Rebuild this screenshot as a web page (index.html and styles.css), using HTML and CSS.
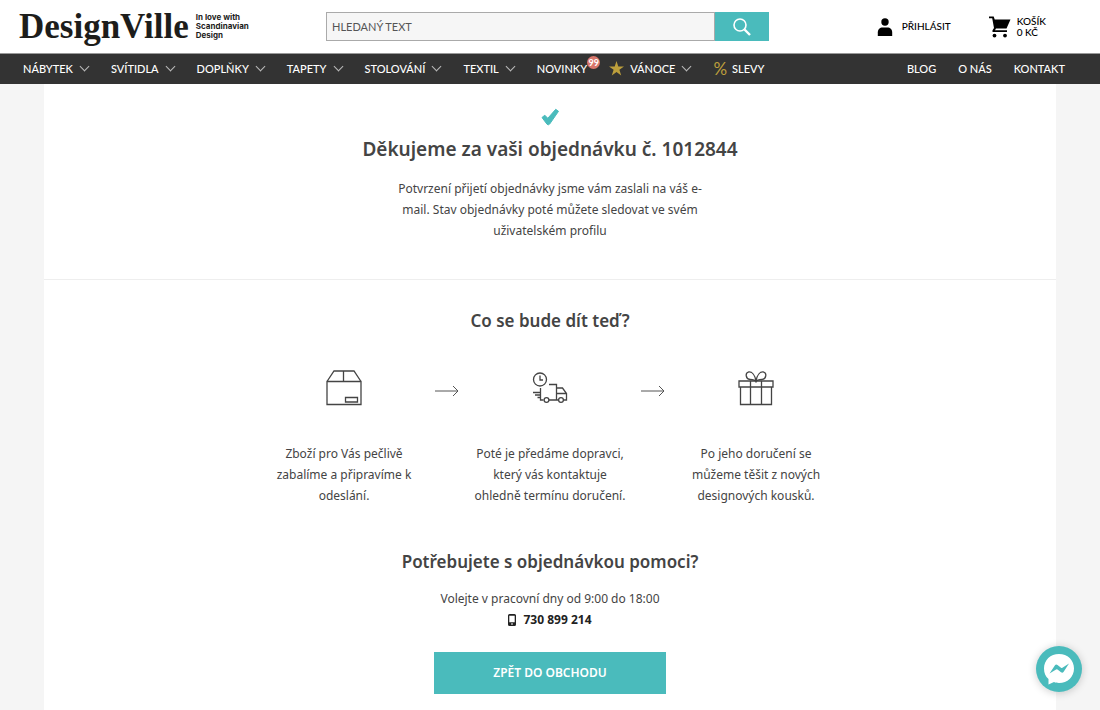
FILE: index.html
```html
<!DOCTYPE html>
<html lang="cs">
<head>
    <meta charset="UTF-8">
    <meta name="viewport" content="width=device-width, initial-scale=1.0">
    <title>DesignVille</title>
    <link rel="stylesheet" href="styles.css">
</head>
<body>

    <header class="header">
        <a class="logo" href="#">
            <span class="logo-name">DesignVille</span>
            <span class="logo-claim">In love with<br>Scandinavian<br>Design</span>
        </a>

        <form class="search">
            <input class="search-input" type="text" placeholder="HLEDANÝ TEXT" aria-label="Hledaný text">
            <button class="search-button" type="submit" aria-label="Hledat">
                <svg width="20" height="20" viewBox="0 0 20 20" fill="none" stroke="#fff">
                    <circle cx="8" cy="8" r="6" stroke-width="1.600"/>
                    <path d="M12.500 12.500l5.500 5.500" stroke-width="2.400"/>
                </svg>
            </button>
        </form>

        <div class="user-links">
            <a class="user-link login" href="#">
                <svg width="16" height="18" viewBox="0 0 16 18">
                    <circle cx="8" cy="4" r="3.700"/>
                    <path d="M.8 18v-3.500C.8 11 3 9.400 5.500 9.400h5c2.500 0 4.700 1.600 4.700 5.100V18z"/>
                </svg>
                <span>PŘIHLÁSIT</span>
            </a>
            <a class="user-link" href="#">
                <svg width="22" height="22" viewBox="0 0 22 22">
                    <path d="M0 .5h4.700l1 3H21.500L17.500 12.500H7L6 14.300H18V16H3.500V14.300L5 12 3.200 2.200H0z"/>
                    <circle cx="5.500" cy="19.600" r="1.900"/>
                    <circle cx="16" cy="19.600" r="1.900"/>
                </svg>
                <span>KOŠÍK<br>0 KČ</span>
            </a>
        </div>
    </header>

    <nav class="nav">
        <a class="nav-link dropdown" href="#">NÁBYTEK</a>
        <a class="nav-link dropdown" href="#">SVÍTIDLA</a>
        <a class="nav-link dropdown" href="#">DOPLŇKY</a>
        <a class="nav-link dropdown" href="#">TAPETY</a>
        <a class="nav-link dropdown" href="#">STOLOVÁNÍ</a>
        <a class="nav-link dropdown" href="#">TEXTIL</a>
        <a class="nav-link" href="#">NOVINKY<span class="badge">99</span></a>
        <a class="nav-link dropdown" href="#">
            <svg class="star" width="15" height="15" viewBox="0 0 15 15">
                <path fill="#bd9f3c" d="M7.500 0l1.800 5.400H15l-4.600 3.400 1.800 5.700-4.700-3.500-4.700 3.500 1.800-5.700L0 5.400h5.700z"/>
            </svg>
            VÁNOCE
        </a>
        <a class="nav-link" href="#"><span class="percent">%</span>SLEVY</a>
        <div class="nav-right">
            <a class="nav-link" href="#">BLOG</a>
            <a class="nav-link" href="#">O NÁS</a>
            <a class="nav-link" href="#">KONTAKT</a>
        </div>
    </nav>

    <main class="content">
        <section class="thanks">
            <svg class="check" width="18" height="18" viewBox="0 0 18 18">
                <path fill="#4abbbc" stroke="#4abbbc" stroke-linejoin="round" d="M1 9.500L3.800 7.200 6.800 10.300 14.700 1.300 17.500 3.300 8.700 16Q7.400 17.500 6 16.200z"/>
            </svg>
            <h1>Děkujeme za vaši objednávku č. 1012844</h1>
            <p>Potvrzení přijetí objednávky jsme vám zaslali na váš e-mail. Stav objednávky poté můžete sledovat ve svém uživatelském profilu</p>
        </section>

        <section class="next">
            <h2>Co se bude dít teď?</h2>
            <div class="steps">
                <div class="step">
                    <svg width="36" height="36" viewBox="0 0 36 36" fill="none" stroke="#444" stroke-width="1.300">
                        <path d="M1 11.500h34V34.500H1zM1 11.500L8 1h20l7 10.500M17.500 1v10.500M19.500 27.500h12v4.500h-12z"/>
                    </svg>
                    <p>Zboží pro Vás pečlivě zabalíme a připravíme k odeslání.</p>
                </div>
                <svg class="arrow" width="24" height="12" viewBox="0 0 24 12" fill="none" stroke="#555">
                    <path d="M0 6h23M18 1l5 5-5 5"/>
                </svg>
                <div class="step">
                    <svg width="36" height="36" viewBox="0 0 36 36" fill="none" stroke="#444" stroke-width="1.300">
                        <circle cx="8" cy="9.500" r="6.500"/>
                        <path d="M8 5.500v4.500h3M17 14.500h7.500V30M8.500 18v12h3M17 30h9.500M31.500 30H34.500V23.500L30.500 18H24.500M24.500 23.500h10M1 22.500h7M3 25h5M5.500 27.500h3"/>
                        <circle cx="14.500" cy="30" r="2.400"/>
                        <circle cx="29" cy="30" r="2.400"/>
                    </svg>
                    <p>Poté je předáme dopravci, který vás kontaktuje ohledně termínu doručení.</p>
                </div>
                <svg class="arrow" width="24" height="12" viewBox="0 0 24 12" fill="none" stroke="#555">
                    <path d="M0 6h23M18 1l5 5-5 5"/>
                </svg>
                <div class="step">
                    <svg width="36" height="36" viewBox="0 0 36 36" fill="none" stroke="#444" stroke-width="1.300">
                        <path d="M1 11h34v6H1zM2.500 17v17.500h31V17M12.500 11v23.500M23.500 11v23.500"/>
                        <path d="M18 11C17 5 14 1.500 10.500 2 7 3 7.500 9 12 9.500c3 .3 5 .5 6 1.500zM18 11c1-6 4-9.500 7.500-9C29 3 28.500 9 24 9.500c-3 .3-5 .5-6 1.500z"/>
                    </svg>
                    <p>Po jeho doručení se můžeme těšit z nových designových kousků.</p>
                </div>
            </div>
        </section>

        <section class="help">
            <h2>Potřebujete s objednávkou pomoci?</h2>
            <p>Volejte v pracovní dny od 9:00 do 18:00</p>
            <a class="phone" href="tel:730899214">
                <svg width="8" height="12" viewBox="0 0 8 12">
                    <path fill="#222" fill-rule="evenodd" d="M1.500 0h5Q8 0 8 1.500v9Q8 12 6.500 12h-5Q0 12 0 10.500v-9Q0 0 1.500 0zM1.300 1.800v6.400h5.400V1.800zM3 9.600v1h2v-1z"/>
                </svg>
                730 899 214
            </a>
            <a class="back-button" href="#">ZPĚT DO OBCHODU</a>
        </section>
    </main>

    <button class="chat" type="button" aria-label="Chat">
        <svg width="32" height="32" viewBox="0 0 32 32">
            <path fill="#fff" d="M16 1C24.500 1 31 7 31 15.500S24.500 30 16 30c-2 0-3.500-.3-5-.9L5.500 31.500V26C2.500 23.500 1 20 1 15.500 1 7 7.500 1 16 1z"/>
            <path fill="#4abbbc" d="M6.500 20.500L12 12.300q1-1.300 2.500-.3l3.500 2.700q.7.500 1.400 0L26 10.500 20.500 19q-1 1.300-2.500.3l-3.500-2.700q-.7-.5-1.400 0z"/>
        </svg>
    </button>

</body>
</html>
```
FILE: styles.css
```css
* {
    box-sizing: border-box;
}

body {
    margin: 0;
    font-family: "Noto Sans", sans-serif;
    font-size: 12px;
    line-height: 21px;
    color: #444;
    background-color: #f5f5f5;
}

a {
    color: inherit;
    text-decoration: none;
}

/* Header */
.header {
    display: grid;
    grid-template-columns: 1fr 443px 1fr;
    align-items: center;
    height: 54px;
    padding: 0 24px 0 19px;
    background-color: #fff;
    border-bottom: 1px solid #999;
}

.logo {
    display: flex;
    align-items: center;
    gap: 7px;
    color: #1d1d1b;
}

.logo-name {
    font-family: "Liberation Serif", serif;
    font-size: 35px;
    font-weight: bold;
    line-height: 40px;
}

.logo-claim {
    font-family: Inter, sans-serif;
    font-size: 8px;
    font-weight: 700;
    line-height: 9px;
}

.search {
    display: flex;
    height: 29px;
}

.search-input {
    flex: 1;
    min-width: 0;
    padding: 0 5px;
    font-family: Lato, sans-serif;
    font-size: 11px;
    background-color: #f6f6f6;
    border: 1px solid #aaa;
    border-radius: 0;
}

.search-input::placeholder {
    color: #555;
    opacity: 1;
}

.search-button {
    display: flex;
    align-items: center;
    justify-content: center;
    width: 54px;
    padding: 0;
    background-color: #4abbbc;
    border: none;
    cursor: pointer;
}

.user-links {
    display: flex;
    justify-content: flex-end;
    gap: 38px;
    padding-right: 30px;
}

.user-link {
    display: flex;
    align-items: center;
    gap: 6px;
    font-family: Lato, sans-serif;
    font-size: 10px;
    font-weight: 500;
    line-height: 11px;
    color: #000;
}

.login {
    gap: 9px;
}

/* Navigation */
.nav {
    display: flex;
    align-items: center;
    gap: 22px;
    height: 30px;
    padding: 0 35px 2px 23px;
    font-family: Lato, sans-serif;
    font-size: 11px;
    font-weight: 500;
    color: #fff;
    background-color: #333;
}

.nav-link {
    position: relative;
    display: flex;
    align-items: center;
    white-space: nowrap;
}

.dropdown::after {
    content: "";
    width: 6px;
    height: 6px;
    margin: 0 1px 4px 8px;
    border-right: 1px solid #bbb;
    border-bottom: 1px solid #bbb;
    transform: rotate(45deg);
}

.nav-right {
    display: flex;
    gap: 22px;
    margin-left: auto;
}

.badge {
    position: absolute;
    top: -2px;
    left: 100%;
    width: 13px;
    height: 13px;
    font-size: 9px;
    font-weight: bold;
    line-height: 13px;
    text-align: center;
    background-color: #d9776c;
    border-radius: 50%;
}

.star {
    margin-right: 6px;
}

.percent {
    margin-right: 5px;
    font-size: 17px;
    font-weight: 400;
    color: #bd9f3c;
}

/* Content */
.content {
    margin: 0 4%;
    padding-bottom: 24px;
    text-align: center;
    background-color: #fff;
}

h1,
h2 {
    margin: 0;
    font-weight: 600;
}

h1 {
    font-size: 19px;
    line-height: 28px;
}

h2 {
    font-size: 17px;
    line-height: 24px;
}

p {
    margin: 0;
}

.thanks {
    padding: 24px 0 38px;
    border-bottom: 1px solid #eee;
}

.check {
    display: block;
    margin: 0 auto 9px;
}

.thanks p {
    max-width: 310px;
    margin: 15px auto 0;
}

.next {
    padding-top: 29px;
}

.steps {
    display: flex;
    justify-content: center;
    margin-top: 37px;
}

.step {
    width: 182px;
    padding: 0 13px;
}

.step svg {
    display: block;
    margin: 0 auto 37px;
}

.arrow {
    margin-top: 15px;
}

.help {
    display: flex;
    flex-direction: column;
    align-items: center;
    padding-top: 44px;
}

.help p {
    margin-top: 14px;
}

.phone {
    display: flex;
    align-items: center;
    gap: 7px;
    font-weight: 700;
    color: #222;
}

.back-button {
    width: 232px;
    margin-top: 22px;
    font-weight: 600;
    line-height: 42px;
    color: #fff;
    background-color: #4abbbc;
}

/* Chat bubble */
.chat {
    position: fixed;
    right: 18px;
    bottom: 18px;
    display: flex;
    align-items: center;
    justify-content: center;
    width: 46px;
    height: 46px;
    padding: 0;
    background-color: #4abbbc;
    border: none;
    border-radius: 50%;
    box-shadow: 0 1px 8px rgba(0, 0, 0, 0.2);
    cursor: pointer;
}
```
